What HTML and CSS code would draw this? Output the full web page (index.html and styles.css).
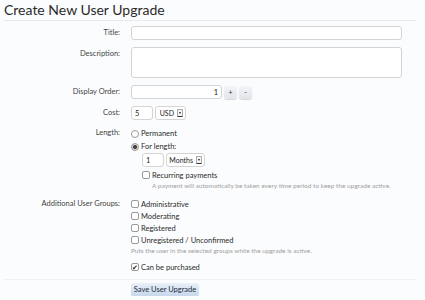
FILE: index.html
```html
<!DOCTYPE html>
<html lang="en">
<head>
    <meta charset="UTF-8">
    <title>Create New User Upgrade</title>
    <link rel="stylesheet" href="styles.css">
</head>
<body>
    <div class="page">
        <h1 class="title">Create New User Upgrade</h1>
        <form class="form">
            <div class="row">
                <label class="label">Title:</label>
                <div class="field"><input type="text" class="input wide"></div>
            </div>
            <div class="row">
                <label class="label">Description:</label>
                <div class="field"><textarea class="input wide area"></textarea></div>
            </div>
            <div class="row">
                <label class="label">Display Order:</label>
                <div class="field inline">
                    <input type="text" class="input order" value="1">
                    <span class="spin">+</span>
                    <span class="spin">-</span>
                </div>
            </div>
            <div class="row">
                <label class="label">Cost:</label>
                <div class="field inline">
                    <input type="text" class="input small" value="5">
                    <span class="select usd">USD<span class="arrow"></span></span>
                </div>
            </div>
            <div class="row">
                <label class="label label-top">Length:</label>
                <div class="field">
                    <div class="line"><span class="radio"></span>Permanent</div>
                    <div class="line"><span class="radio on"></span>For length:</div>
                    <div class="indent inline">
                        <input type="text" class="input small" value="1">
                        <span class="select months">Months<span class="arrow"></span></span>
                    </div>
                    <div class="indent recurring">
                        <div class="line"><span class="check"></span>Recurring payments</div>
                        <p class="hint sub">A payment will automatically be taken every time period to keep the upgrade active.</p>
                    </div>
                </div>
            </div>
            <div class="row groups">
                <label class="label label-top">Additional User Groups:</label>
                <div class="field">
                    <div class="line"><span class="check"></span>Administrative</div>
                    <div class="line"><span class="check"></span>Moderating</div>
                    <div class="line"><span class="check"></span>Registered</div>
                    <div class="line"><span class="check"></span>Unregistered / Unconfirmed</div>
                    <p class="hint">Puts the user in the selected groups while the upgrade is active.</p>
                    <div class="line purchase"><span class="check on">&#10004;</span>Can be purchased</div>
                </div>
            </div>
            <div class="submit">
                <button type="button" class="btn">Save User Upgrade</button>
            </div>
        </form>
    </div>
</body>
</html>
```

FILE: styles.css
```css
* {
    box-sizing: border-box;
    margin: 0;
    padding: 0;
}

body {
    background: #fbfcfd;
    color: #333;
    font-family: 'Lato', 'Liberation Sans', sans-serif;
    font-size: 7.5px;
}

.page {
    padding: 0 9px 0 4px;
}

.title {
    font-weight: 400;
    font-size: 14px;
    line-height: 20px;
    color: #2b2b2b;
    border-bottom: 1px solid #e6e9ee;
}

.form {
    padding-top: 5px;
}

.row {
    display: grid;
    grid-template-columns: 116px 1fr;
    column-gap: 11px;
    margin-bottom: 7px;
}

.label {
    text-align: right;
    line-height: 14px;
    color: #444;
}

.label-top {
    line-height: 12px;
}

.inline {
    display: flex;
    align-items: center;
    gap: 2px;
}

.input {
    display: block;
    flex-shrink: 0;
    height: 14px;
    border: 1px solid #d4d4d4;
    border-radius: 3px;
    background: #fff;
    font-family: inherit;
    font-size: 7.5px;
    color: #222;
    padding: 0 3px;
    outline: none;
}

.wide {
    width: 271px;
}

.area {
    height: 31px;
    resize: none;
}

.order {
    width: 91px;
    text-align: right;
}

.small {
    width: 22px;
}

.spin {
    flex-shrink: 0;
    width: 13px;
    height: 13px;
    border-radius: 3px;
    background: linear-gradient(#f3f4f7, #e2e4ea);
    box-shadow: 0 1px 1px rgba(0, 0, 0, 0.15);
    text-align: center;
    line-height: 13px;
    font-size: 7px;
    color: #333;
}

.select {
    display: flex;
    flex-shrink: 0;
    align-items: center;
    justify-content: flex-end;
    gap: 3px;
    height: 14px;
    border: 1px solid #d4d4d4;
    border-radius: 3px;
    background: #fff;
    padding: 0 2px 0 3px;
    color: #222;
    font-size: 7px;
    white-space: nowrap;
}

.usd {
    width: 31px;
}

.months {
    width: 39px;
}

.arrow {
    flex-shrink: 0;
    width: 6px;
    height: 8px;
    border: 1px solid #aaa;
    border-bottom: 1px solid #333;
    border-radius: 1px;
    position: relative;
    background: #f4f4f4;
}

.arrow::after {
    content: "";
    position: absolute;
    left: 1px;
    top: 2px;
    border-left: 1.5px solid transparent;
    border-right: 1.5px solid transparent;
    border-top: 2px solid #222;
}

.line {
    display: flex;
    align-items: center;
    height: 13px;
    color: #2b2b2b;
}

.radio {
    flex-shrink: 0;
    width: 8px;
    height: 8px;
    border: 1px solid #999;
    border-radius: 50%;
    background: #fff;
    margin-right: 2px;
}

.radio.on {
    background: radial-gradient(circle, #444 0, #444 1.8px, #ddd 2.3px);
}

.check {
    flex-shrink: 0;
    width: 8px;
    height: 8px;
    border: 1px solid #999;
    border-radius: 2px;
    background: #fff;
    margin-right: 2px;
    font-size: 7px;
    line-height: 6px;
    text-align: center;
    color: #222;
}

.indent {
    margin-left: 11px;
}

.recurring {
    margin-top: 2px;
}

.recurring .line {
    height: 12px;
}

.hint {
    color: #a0a0a0;
    font-size: 6.5px;
    line-height: 9px;
}

.hint.sub {
    padding-left: 10px;
}

.groups {
    margin-top: 8px;
    margin-bottom: 0;
}

.groups .line {
    height: 12px;
}

.groups .hint {
    line-height: 10px;
}

.purchase {
    margin-top: 5px;
}

.submit {
    margin-top: 6px;
    border-top: 1px solid #eef0f3;
    padding: 3px 0 0 127px;
}

.btn {
    height: 13px;
    width: 68px;
    border: none;
    border-radius: 3px;
    background: linear-gradient(#e9f0f9, #c6d8ec);
    box-shadow: 0 1px 1px rgba(0, 0, 0, 0.15);
    font-family: inherit;
    font-size: 7.5px;
    color: #1e2a38;
}
```
